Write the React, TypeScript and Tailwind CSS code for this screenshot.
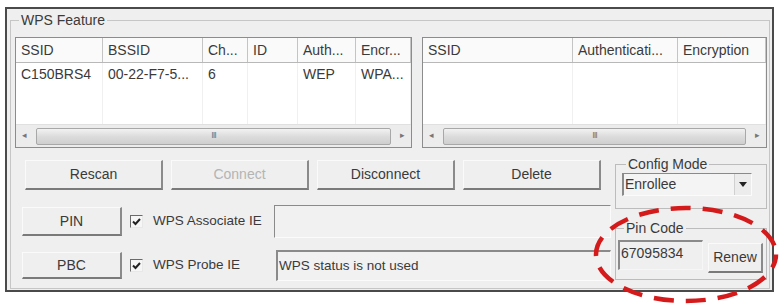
import React from "react";

const font = { fontFamily: '"Liberation Sans", Arial, sans-serif' };

function Btn({ label, w, h, disabled }: { label: string; w: string; h: string; disabled?: boolean }) {
  return (
    <div
      className={`${w} ${h} flex items-center justify-center bg-[#efefef] border border-t-[#fafafa] border-l-[#fafafa] border-b-2 border-r-2 border-b-[#7a7a7a] border-r-[#8a8a8a] text-[14px] ${
        disabled ? "text-[#b4b4b4]" : "text-[#3a3a3a]"
      }`}
    >
      {label}
    </div>
  );
}

function Check() {
  return (
    <div className="w-[13px] h-[13px] border border-t-[#6a6a6a] border-l-[#6a6a6a] border-b-[#e8e8e8] border-r-[#e8e8e8] bg-[#f6f6f6] flex items-center justify-center">
      <svg width="9" height="8" viewBox="0 0 9 8">
        <path d="M1 3.5 L3.5 6 L8 1" stroke="#222" strokeWidth="2" fill="none" />
      </svg>
    </div>
  );
}

function ScrollBar() {
  return (
    <div className="h-[23px] flex items-center bg-[#ececec] border-t border-[#e0e0e0] px-[6px]">
      <span className="text-[9px] text-[#777] w-[12px]">◂</span>
      <div className="flex-1 h-[17px] mx-[2px] rounded-[2px] border border-[#a8a8a8] bg-gradient-to-b from-[#f2f2f2] via-[#dcdcdc] to-[#cfcfcf] flex items-center justify-center">
        <span className="text-[9px] tracking-[-1px] text-[#777]">III</span>
      </div>
      <span className="text-[9px] text-[#777] w-[12px] text-right">▸</span>
    </div>
  );
}

function ListView({
  cols,
  headers,
  row,
  w,
}: {
  cols: string;
  headers: string[];
  row: string[];
  w: string;
}) {
  return (
    <div className={`${w} h-[111px] border border-[#8c8c8c] bg-white flex flex-col`}>
      <div className={`grid ${cols} h-[25px] border-b border-[#b8b8b8] bg-[#fafafa]`}>
        {headers.map((h, i) => (
          <div key={i} className="border-r border-[#c4c4c4] pl-[5px] flex items-center text-[14px] text-[#3a3a3a] whitespace-nowrap overflow-hidden">
            {h}
          </div>
        ))}
      </div>
      <div className={`grid ${cols} flex-1`}>
        {headers.map((_, i) => (
          <div key={i} className="border-r border-[#f0f0f0] pl-[5px] pt-[1px] text-[14px] text-[#3a3a3a] whitespace-nowrap overflow-hidden">
            {row[i]}
          </div>
        ))}
      </div>
      <ScrollBar />
    </div>
  );
}

export default function App() {
  return (
    <div className="w-[781px] h-[306px] bg-white pt-[7px] pl-[5px] relative" style={font}>
      <div className="w-[769px] h-[285px] border-2 border-[#4a4a4a] bg-[#efefef] pt-[3px] px-[3px]">
        <fieldset className="border border-[#c6c6c6] h-[277px] pl-[4px] pr-[2px] pt-[9px]">
          <legend className="text-[14px] text-[#3a3a3a] ml-[4px] px-[2px] leading-[16px]">WPS Feature</legend>

          <div className="flex gap-[10px]">
            <ListView
              w="w-[397px]"
              cols="grid-cols-[87px_100px_45px_50px_58px_1fr]"
              headers={["SSID", "BSSID", "Ch...", "ID", "Auth...", "Encr..."]}
              row={["C150BRS4", "00-22-F7-5...", "6", "", "WEP", "WPA..."]}
            />
            <ListView
              w="w-[345px]"
              cols="grid-cols-[150px_105px_1fr]"
              headers={["SSID", "Authenticati...", "Encryption"]}
              row={["", "", ""]}
            />
          </div>

          <div className="flex gap-[4px]">
            {/* left part */}
            <div className="w-[596px]">
              <div className="flex gap-[8px] mt-[12px] pl-[10px]">
                <Btn label="Rescan" w="w-[138px]" h="h-[30px]" />
                <Btn label="Connect" w="w-[138px]" h="h-[30px]" disabled />
                <Btn label="Disconnect" w="w-[138px]" h="h-[30px]" />
                <Btn label="Delete" w="w-[138px]" h="h-[30px]" />
              </div>

              <div className="flex items-center mt-[15px] pl-[7px] h-[33px]">
                <Btn label="PIN" w="w-[100px]" h="h-[29px]" />
                <div className="ml-[8px]">
                  <Check />
                </div>
                <span className="ml-[10px] text-[13.5px] text-[#3a3a3a] whitespace-nowrap">WPS Associate IE</span>
                <div className="ml-[12px] flex-1 h-[33px] border border-t-[#8a8a8a] border-l-[#8a8a8a] border-b-[#fbfbfb] border-r-[#fbfbfb] bg-[#f1f1f1]" />
              </div>

              <div className="flex items-center mt-[12px] pl-[7px] h-[31px]">
                <Btn label="PBC" w="w-[100px]" h="h-[27px]" />
                <div className="ml-[8px]">
                  <Check />
                </div>
                <span className="ml-[10px] text-[13.5px] text-[#3a3a3a] whitespace-nowrap">WPS Probe IE</span>
                <div className="ml-[36px] flex-1 h-[31px] border border-t-2 border-l-2 border-t-[#8a8a8a] border-l-[#8a8a8a] border-b-[#fbfbfb] border-r-[#fbfbfb] bg-[#f1f1f1] flex items-center pl-[1px] text-[13.5px] text-[#3a3a3a]">
                  WPS status is not used
                </div>
              </div>
            </div>

            {/* right part */}
            <div className="w-[152px]">
              <fieldset className="border border-[#bcbcbc] mt-[8px] h-[53px] px-[6px]">
                <legend className="text-[14px] text-[#3a3a3a] ml-[4px] px-[2px] leading-[16px]">Config Mode</legend>
                <div className="mt-[1px] h-[23px] w-[130px] flex border border-t-[#8a8a8a] border-l-2 border-l-[#8a8a8a] border-b-[#fbfbfb] border-r-[#fbfbfb] bg-[#f4f4f4]">
                  <span className="flex-1 text-[14px] text-[#3a3a3a] pl-[1px] leading-[20px]">Enrollee</span>
                  <div className="w-[17px] flex items-center justify-center bg-[#ececec] border-l border-[#d0d0d0]">
                    <svg width="8" height="5" viewBox="0 0 8 5">
                      <path d="M0 0 H8 L4 5 Z" fill="#222" />
                    </svg>
                  </div>
                </div>
              </fieldset>

              <fieldset className="border border-[#bcbcbc] mt-[11px] h-[60px] pl-[2px] pr-[2px]">
                <legend className="text-[14px] text-[#3a3a3a] ml-[6px] px-[2px] leading-[16px]">Pin Code</legend>
                <div className="flex items-start mt-[4px]">
                  <div className="w-[85px] h-[30px] border-t-2 border-l-2 border-[#8a8a8a] border-b border-r border-b-[#f6f6f6] border-r-[#f6f6f6] text-[14px] text-[#3a3a3a] leading-[22px] pl-[1px]">
                    67095834
                  </div>
                  <div className="ml-[5px] mt-[3px]">
                    <Btn label="Renew" w="w-[55px]" h="h-[30px]" />
                  </div>
                </div>
              </fieldset>
            </div>
          </div>
        </fieldset>
      </div>

      {/* red dashed highlight */}
      <svg className="absolute left-[593px] top-[205px]" width="186" height="99" viewBox="0 0 186 99">
        <ellipse cx="93" cy="49.5" rx="90" ry="46.5" fill="none" stroke="#d41a1a" strokeWidth="4.5" strokeDasharray="20 12" strokeDashoffset="6" />
      </svg>
    </div>
  );
}
